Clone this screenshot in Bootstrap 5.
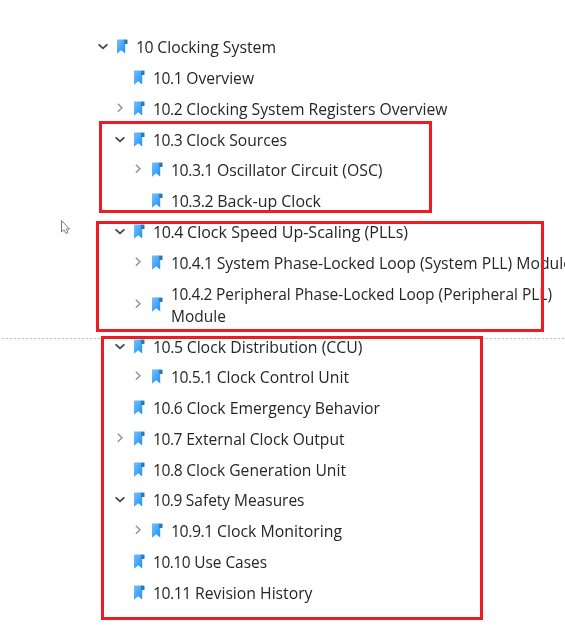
<!DOCTYPE html>
<html lang="en">
<head>
<meta charset="utf-8">
<title>Clocking System bookmarks</title>
<meta name="viewport" content="width=device-width, initial-scale=1">
<link href="https://cdn.jsdelivr.net/npm/bootstrap@5.3.0/dist/css/bootstrap.min.css" rel="stylesheet">
<style>
body{width:565px;height:629px;background:#fff;color:#262626;font-family:"Open Sans","Noto Sans",sans-serif;font-size:16px;}
.outline{padding-top:32px;padding-left:96px;filter:blur(.35px)}
.node{height:30.75px;white-space:nowrap}
.node.tall{height:53.3px}
.lvl1{padding-left:17.2px}
.lvl2{padding-left:35px}
.twist{width:14px;height:14px;flex:none;fill:none;stroke:#444;stroke-width:1.8}
.twist.shut{stroke:#8c8c8c;stroke-width:1.3}
.flag{width:12px;height:16px;flex:none;margin-left:6px;margin-right:8px}
.label{line-height:22px;transform-origin:0 50%;}
.num{letter-spacing:-.45px}
.frame{border:3px solid #ed1c24}
.f1{left:99px;top:121px;width:333px;height:92px}
.f2{left:96px;top:221px;width:448px;height:111px}
.f3{left:101px;top:336px;width:382px;height:284px}
.rule{left:2px;top:338px;width:563px;height:1px;background:repeating-linear-gradient(90deg,#c4c4c4 0 2px,#f2f2f2 2px 4px)}
.pointer{left:60px;top:219px;width:11px;height:16px;filter:blur(.3px)}
</style>
<script src="https://cdn.jsdelivr.net/npm/bootstrap@5.3.0/dist/js/bootstrap.bundle.min.js"></script>
</head>
<body class="position-relative overflow-hidden m-0">
<svg width="0" height="0" class="position-absolute" aria-hidden="true">
<defs>
<linearGradient id="blue" x1="0" y1="0" x2="1" y2="1"><stop offset="0" stop-color="#74c0fa"/><stop offset="1" stop-color="#1e90f5"/></linearGradient>
<symbol id="mark-icon" viewBox="0 0 12 16"><path d="M1 .6H9.2V14.4L5.2 11.2L1 14.8Z" fill="url(#blue)"/><path d="M8.2 .6H11.5V5H8.2Z" fill="#2878b8"/></symbol>
<symbol id="open" viewBox="0 0 14 14"><path d="M2.6 4.3L7 8.3L11.4 4.3"/></symbol>
<symbol id="shut" viewBox="0 0 14 14"><path d="M4.8 1.8L9 5.8L4.8 9.8"/></symbol>
</defs>
</svg>
<div class="rule position-absolute"></div>
<main class="outline d-flex flex-column" id="outline"></main>
<svg class="pointer position-absolute" viewBox="0 0 11 16"><path d="M1.5 1.5V13L4 10.8L6 14.5L8 13.5L6.4 10H9.5Z" fill="#fff" stroke="#777" stroke-width="1"/></svg>
<div class="frame f1 position-absolute"></div>
<div class="frame f2 position-absolute"></div>
<div class="frame f3 position-absolute"></div>
<script>
// level, twisty state, number, title, label width in px
const nodes = [
[0,'open','10','Clocking System',140],
[1,'','10.1','Overview',101],
[1,'shut','10.2','Clocking System Registers Overview',294.5],
[1,'open','10.3','Clock Sources',134],
[2,'shut','10.3.1','Oscillator Circuit (OSC)',211.5],
[2,'','10.3.2','Back-up Clock',150],
[1,'open','10.4','Clock Speed Up-Scaling (PLLs)',255],
[2,'shut','10.4.1','System Phase-Locked Loop (System PLL) Module',401],
[2,'shut','10.4.2','Peripheral Phase-Locked Loop (Peripheral PLL)<br>Module',381],
[1,'open','10.5','Clock Distribution (CCU)',209.5],
[2,'shut','10.5.1','Clock Control Unit',178],
[1,'','10.6','Clock Emergency Behavior',227],
[1,'shut','10.7','External Clock Output',191.5],
[1,'','10.8','Clock Generation Unit',193],
[1,'open','10.9','Safety Measures',151.5],
[2,'shut','10.9.1','Clock Monitoring',171],
[1,'','10.10','Use Cases',114],
[1,'','10.11','Revision History',159.5]
];
const outline = document.getElementById('outline');
for (const [level, state, num, text, width] of nodes) {
  const row = document.createElement('div');
  row.className = `node d-flex align-items-center lvl${level}` + (text.includes('<br>') ? ' tall' : '');
  row.innerHTML = `<svg class="twist ${state}">${state ? `<use href="#${state}"/>` : ''}</svg>` +
    `<svg class="flag"><use href="#mark-icon"/></svg><span class="label"><span class="num">${num}</span> ${text}</span>`;
  outline.append(row);
  const label = row.lastChild;
  label.style.transform = `scaleX(${width / label.getBoundingClientRect().width})`;
}
</script>
</body>
</html>
